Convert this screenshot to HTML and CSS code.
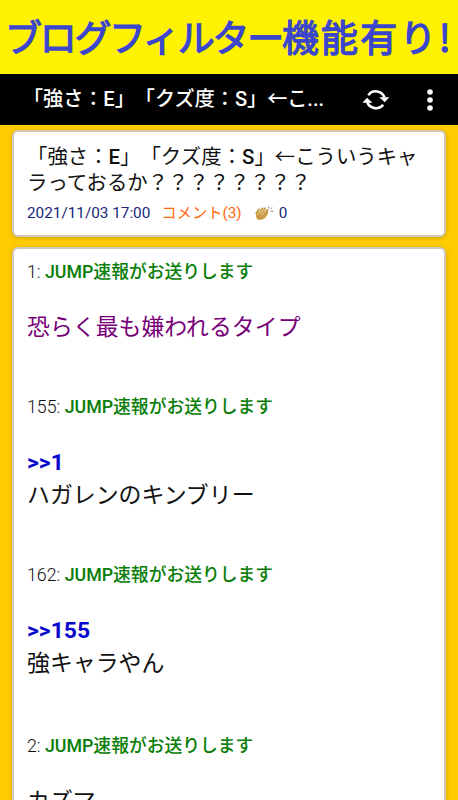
FILE: index.html
```
<!DOCTYPE html>
<html lang="ja">
<head>
    <meta charset="UTF-8">
    <meta name="viewport" content="width=device-width, initial-scale=1.0">
    <title>ブログリーダー</title>
    <link rel="stylesheet" href="styles.css">
</head>
<body>
    <div class="banner"><span class="kana">ブログフィルター</span><span class="kanji">機能有り</span><span class="mark">!</span></div>

    <header class="topbar">
        <div class="bar-title">「強さ：E」「クズ度：S」←こ...</div>
        <svg class="refresh" viewBox="0 0 28 24" width="28" height="24">
            <path d="M6.3 7.2A9.3 9.3 0 0 1 22.6 9.5M21.2 16.8A9.3 9.3 0 0 1 5.2 14" fill="none" stroke="#fff" stroke-width="2.6"/>
            <path d="M17.3 9.2H27.3L22.8 14.3zM.5 14.8L5 9.7L10.5 14.8z" fill="#fff"/>
        </svg>
        <svg class="more" viewBox="0 0 6 22" width="6" height="22">
            <circle cx="3" cy="3" r="2.8" fill="#fff"/>
            <circle cx="3" cy="11" r="2.8" fill="#fff"/>
            <circle cx="3" cy="19" r="2.8" fill="#fff"/>
        </svg>
    </header>

    <main>
        <div class="card head">
            <h1>「強さ：<b>E</b>」「クズ度：<b>S</b>」←こういうキャラっておるか？？？？？？？？</h1>
            <div class="info">
                <span class="date">2021/11/03 17:00</span>
                <span class="comment">コメント(3)</span>
                <svg class="clap" viewBox="0 0 20 15" width="20" height="15">
                    <path d="M1.2 7.2L4 3.2M3.4 8L7.5 2.2M5.5 8.5L10 2.3M7.5 9L12.2 4" stroke="#c99b45" stroke-width="1.8" stroke-linecap="round"/>
                    <path d="M1 6.5L5 5.5L10.5 4.5L13.5 3.2L12.6 8.5Q11 12 7 13.7L2.5 13.8Q.4 11 1 6.5z" fill="#c99b45"/>
                    <path d="M2.6 8.3L5.6 4.2M4.8 8.7L8.7 3.5M7 9.2L10.8 4.7" stroke="#f5dfad" stroke-width=".7"/>
                    <path d="M14 2.5L13.5.6M15.6 3L17.3 1.4M15.7 5L18.3 5.5" stroke="#888" stroke-width="1"/>
                </svg>
                <span class="count">0</span>
            </div>
        </div>

        <div class="card posts">
            <div class="post">
                <div class="name">1: <b>JUMP速報がお送りします</b></div>
                <div class="text purple">恐らく最も嫌われるタイプ</div>
            </div>
            <div class="post">
                <div class="name">155: <b>JUMP速報がお送りします</b></div>
                <div class="text"><span class="anchor">&gt;&gt;1</span><br>ハガレンのキンブリー</div>
            </div>
            <div class="post last-reply">
                <div class="name">162: <b>JUMP速報がお送りします</b></div>
                <div class="text"><span class="anchor">&gt;&gt;155</span><br>強キャラやん</div>
            </div>
            <div class="post">
                <div class="name">2: <b>JUMP速報がお送りします</b></div>
                <div class="text">カズマ</div>
            </div>
        </div>
    </main>
</body>
</html>
```
FILE: styles.css
```
* {
    box-sizing: border-box;
}
body {
    margin: 0;
    height: 800px;
    overflow: hidden;
    display: flex;
    flex-direction: column;
    background-color: #ffcc00;
    font-family: Roboto, "Noto Sans CJK JP", sans-serif;
    color: #111;
    /* keep the brackets full width */
    text-spacing-trim: space-all;
}
.banner {
    flex: none;
    height: 74px;
    padding-left: 5px;
    background-color: #fff200;
    color: #3c46cc;
    font-family: "Noto Sans CJK JP", sans-serif;
    font-size: 37px;
    font-weight: 400;
    line-height: 72px;
    white-space: nowrap;
    -webkit-text-stroke: 1.3px #3c46cc;
}
.kana {
    letter-spacing: -2.3px;
}
.kanji {
    letter-spacing: 2.2px;
}
.topbar {
    flex: none;
    display: flex;
    align-items: center;
    height: 51px;
    padding: 0 25px 0 23px;
    background-color: #000;
    color: #fff;
}
.bar-title {
    width: 339px;
    font-size: 20.1px;
    font-weight: 500;
    line-height: 51px;
    white-space: nowrap;
}
.refresh {
    flex: none;
}
.more {
    flex: none;
    margin-left: auto;
}
main {
    flex: 1;
    min-height: 0;
    display: flex;
    flex-direction: column;
    padding: 5px 12px 0;
}
.card {
    background-color: #fff;
    border: 2px solid #cfc8b8;
    border-radius: 6px;
    box-shadow: 0 1px 4px rgba(120, 90, 0, 0.35);
    padding: 0 13px;
}
.head {
    flex: none;
    height: 107px;
    padding-top: 12px;
    margin-bottom: 10px;
}
h1 {
    margin: 0;
    font-size: 20.4px;
    font-weight: 400;
    line-height: 26px;
}
h1 b {
    font-weight: 500;
}
.info {
    display: flex;
    align-items: center;
    height: 24px;
    margin-top: 5px;
    font-size: 15.3px;
    line-height: 24px;
    white-space: nowrap;
    color: #19287a;
}
.comment {
    margin-left: 11px;
    color: #ff6a0d;
}
.clap {
    margin: 0 4px 0 13px;
}
.posts {
    flex: 1;
    min-height: 0;
    overflow: hidden;
    padding-top: 9px;
    border-bottom: 0;
    border-bottom-left-radius: 0;
    border-bottom-right-radius: 0;
}
.post {
    margin-bottom: 48px;
}
.last-reply {
    margin-bottom: 51px;
}
.name {
    font-size: 17.8px;
    font-weight: 300;
    line-height: 28px;
    white-space: nowrap;
}
.name b {
    color: #087d08;
    font-weight: 500;
}
.text {
    margin-top: 25px;
    font-size: 22.9px;
    line-height: 33.5px;
}
.purple {
    color: #780078;
}
.anchor {
    color: #0808cc;
    font-weight: 700;
}
```
